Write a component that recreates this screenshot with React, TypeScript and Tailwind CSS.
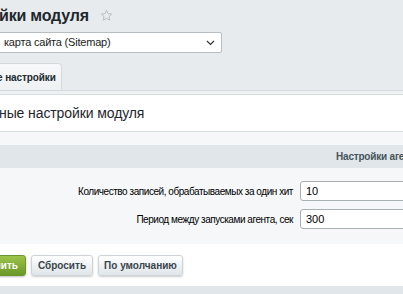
import React from 'react';

// Страница настроек модуля (обрезанный фрагмент админки)
function Star() {
  return (
    <svg width="13" height="13" viewBox="0 0 24 24" fill="none" stroke="#b4bcc1" strokeWidth="1.8" strokeLinejoin="round">
      <path d="M12 2.5l2.9 6.1 6.6.8-4.9 4.6 1.3 6.6L12 17.3l-5.9 3.3 1.3-6.6-4.9-4.6 6.6-.8z" />
    </svg>
  );
}

function Chevron() {
  return (
    <svg width="9" height="6" viewBox="0 0 9 6" fill="none" stroke="#333" strokeWidth="1.2">
      <path d="M1 1l3.5 3.5L8 1" />
    </svg>
  );
}

const ROWS = [
  { label: 'Количество записей, обрабатываемых за один хит', value: '10' },
  { label: 'Период между запусками агента, сек', value: '300' },
];

export default function App() {
  return (
    <div className="w-[403px] h-[294px] overflow-hidden bg-[#e7ebed] text-[#000] font-['Liberation_Sans',Arial,sans-serif]">
      {/* Заголовок */}
      <div className="h-[30px] flex items-center gap-[11px] pt-[1px] whitespace-nowrap">
        <h1 className="-ml-[1px] text-[16px] tracking-[-0.2px] font-bold text-[#1e272c] leading-none">йки модуля</h1>
        <Star />
      </div>

      {/* Выбор модуля */}
      <div className="h-[33px] pt-[2px]">
        <div className="-ml-[2px] w-[224px] h-[21px] bg-white border border-[#b7bec2] rounded-r-[2px] flex items-center justify-between pl-[5px] pr-[6px]">
          <span className="text-[11px] tracking-[-0.2px] text-[#222] whitespace-nowrap">карта сайта (Sitemap)</span>
          <Chevron />
        </div>
      </div>

      {/* Вкладки */}
      <div className="h-[28px] border-b border-[#d3d9dc] flex items-end">
        <div className="-ml-[2px] w-[64px] h-[27px] bg-gradient-to-b from-[#f7f8f9] to-[#eef1f2] border border-b-0 border-[#d3d9dc] rounded-tr-[4px] flex items-center overflow-hidden">
          <span className="-ml-[2px] text-[10px] tracking-[-0.1px] font-bold text-[#212a2f] whitespace-nowrap">е настройки</span>
        </div>
      </div>
      <div className="h-[3px] bg-[#eef1f2]" />

      {/* Основной блок */}
      <div className="bg-white border-t border-[#d7dde0] h-[37px] flex items-center">
        <h2 className="-ml-[1px] text-[14px] tracking-[-0.1px] text-[#1f272b] whitespace-nowrap">ные настройки модуля</h2>
      </div>
      <div className="border-t border-[#d7dde0] h-[14px] bg-[#f5f7f8]" />
      <div className="h-[23px] bg-[#e0e6e9] flex items-center pl-[336px] whitespace-nowrap overflow-hidden">
        <span className="text-[10px] tracking-[-0.2px] font-bold text-[#46555c]">Настройки агента</span>
      </div>

      <div className="bg-[#f5f7f8] h-[76px] pt-[13px] flex flex-col gap-[8px] overflow-hidden">
        {ROWS.map((r) => (
          <div key={r.label} className="flex items-center gap-[7px]">
            <div className="w-[293px] shrink-0 text-right text-[10px] tracking-[-0.45px] text-[#000] whitespace-nowrap">{r.label}</div>
            <div className="w-[120px] h-[20px] bg-white border border-[#a9b0b4] rounded-[3px] flex items-center pl-[5px] text-[11px] shrink-0">
              {r.value}
            </div>
          </div>
        ))}
      </div>

      {/* Кнопки */}
      <div className="bg-white h-[42px] flex items-center gap-[5px] pt-[1px]">
        <button className="-ml-[40px] w-[66px] h-[21px] rounded-[3px] bg-gradient-to-b from-[#9cc44a] to-[#6a9827] border border-[#6e9530] text-white text-[10px] font-bold text-right pr-[7px] shadow-[0_1px_2px_rgba(0,0,0,0.25)]">
          Сохранить
        </button>
        <button className="w-[62px] h-[21px] rounded-[3px] bg-gradient-to-b from-[#ffffff] to-[#dfe5e8] border border-[#cdd3d6] text-[#3b464c] text-[10px] font-bold shadow-[0_1px_2px_rgba(0,0,0,0.2)]">
          Сбросить
        </button>
        <button className="w-[85px] h-[21px] rounded-[3px] bg-gradient-to-b from-[#ffffff] to-[#dfe5e8] border border-[#cdd3d6] text-[#3b464c] text-[10px] font-bold shadow-[0_1px_2px_rgba(0,0,0,0.2)]">
          По умолчанию
        </button>
      </div>
      <div className="h-[10px] bg-[#e0e6e9]" />
    </div>
  );
}
